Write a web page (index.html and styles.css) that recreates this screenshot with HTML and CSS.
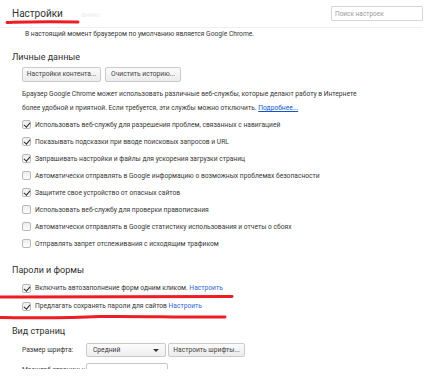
FILE: index.html
```html
<!DOCTYPE html>
<html lang="ru">
<head>
<meta charset="utf-8">
<title>Настройки</title>
<link rel="stylesheet" href="styles.css">
</head>
<body>
<div class="viewport">
  <header class="hdr">
    <h1 class="title">Настройки<span class="ghost">анию</span></h1>
    <input class="search" type="text" placeholder="Поиск настроек">
  </header>
  <p class="note">В настоящий момент браузером по умолчанию является Google Chrome.</p>

  <section class="sec">
    <h3 class="sec-title">Личные данные</h3>
    <div class="indent">
      <div class="btns">
        <button class="btn btn-a">Настройки контента...</button>
        <button class="btn btn-b">Очистить историю...</button>
      </div>
      <p class="desc">Браузер Google Chrome может использовать различные веб-службы, которые делают работу в Интернете<br>более удобной и приятной. Если требуется, эти службы можно отключить. <a class="link" href="#">Подробнее...</a></p>
      <ul class="checks">
        <li class="row"><span class="cb on"></span>Использовать веб-службу для разрешения проблем, связанных с навигацией</li>
        <li class="row"><span class="cb on"></span>Показывать подсказки при вводе поисковых запросов и URL</li>
        <li class="row"><span class="cb on"></span>Запрашивать настройки и файлы для ускорения загрузки страниц</li>
        <li class="row"><span class="cb"></span>Автоматически отправлять в Google информацию о возможных проблемах безопасности</li>
        <li class="row"><span class="cb on"></span>Защитите свое устройство от опасных сайтов</li>
        <li class="row"><span class="cb"></span>Использовать веб-службу для проверки правописания</li>
        <li class="row"><span class="cb"></span>Автоматически отправлять в Google статистику использования и отчеты о сбоях</li>
        <li class="row"><span class="cb"></span>Отправлять запрет отслеживания с исходящим трафиком</li>
      </ul>
    </div>
  </section>

  <section class="sec sec-pw">
    <h3 class="sec-title">Пароли и формы</h3>
    <div class="indent">
      <ul class="checks checks-pw">
        <li class="row"><span class="cb on"></span>Включить автозаполнение форм одним кликом.&nbsp;<a class="link2" href="#">Настроить</a></li>
        <li class="row"><span class="cb on"></span>Предлагать сохранять пароли для сайтов&nbsp;<a class="link2" href="#">Настроить</a></li>
      </ul>
    </div>
  </section>

  <section class="sec sec-view">
    <h3 class="sec-title">Вид страниц</h3>
    <div class="indent">
      <div class="frow">
        <span class="flabel">Размер шрифта:</span>
        <span class="select">Средний<span class="arrow"></span></span>
        <button class="btn btn-font">Настроить шрифты...</button>
      </div>
      <div class="frow">
        <span class="flabel">Масштаб страницы:</span>
        <span class="select select2"></span>
      </div>
    </div>
  </section>
</div>

<svg class="marks" width="434" height="383" viewBox="0 0 434 383" aria-hidden="true">
  <path d="M7 22.5 C 30 21.5, 55 21.5, 78 22" />
  <path d="M0 297 C 80 296.5, 160 296, 232 296.5" />
  <path d="M0 317.5 C 40 318, 70 318, 100 316.5 C 140 316, 180 317.5, 225 317" />
</svg>
</body>
</html>
```

FILE: styles.css
```css
* { box-sizing: border-box; }

html, body {
  margin: 0;
  background: #fff;
}

body {
  width: 434px;
  height: 383px;
  overflow: hidden;
  position: relative;
  font-family: Roboto, "Open Sans", sans-serif;
  color: #383838;
  font-size: 6.7px;
}

.viewport {
  height: 369px;
  overflow: hidden;
}

.hdr {
  width: 423px;
  height: 28px;
  padding-left: 12px;
  display: flex;
  align-items: center;
  justify-content: space-between;
  border-bottom: 1px solid #f0f0f0;
}

.title {
  margin: 0;
  font-size: 10px;
  font-weight: 400;
  color: #333;
  display: flex;
  align-items: baseline;
}

.ghost {
  margin-left: 18px;
  font-size: 7.5px;
  color: #ececec;
}

.search {
  width: 92px;
  height: 15px;
  margin: 0;
  padding: 0 3px;
  border: 1px solid #d6d6d6;
  border-radius: 1px;
  font-family: Roboto, sans-serif;
  font-size: 6.5px;
  color: #999;
  outline: none;
}
.search::placeholder { color: #9a9a9a; }

.note {
  margin: 1px 0 0 25px;
  line-height: 10px;
}

.sec-title {
  margin: 12px 0 0 12px;
  font-size: 9px;
  line-height: 12px;
  font-weight: 400;
  color: #303030;
}

.indent {
  padding-left: 22px;
}

.btns {
  display: flex;
  gap: 4px;
  margin-top: 4px;
}

.btn {
  height: 15px;
  margin: 0;
  padding: 0;
  border: 1px solid #cacaca;
  border-radius: 2px;
  background: linear-gradient(#fbfbfb, #ececec);
  font-family: Roboto, sans-serif;
  font-size: 6.7px;
  color: #444;
  line-height: 13px;
  white-space: nowrap;
  text-align: center;
}

.btn-a { width: 79px; }
.btn-b { width: 76px; }

.desc {
  margin: 5px 0 0;
  line-height: 14px;
  white-space: nowrap;
}

.link {
  color: #1155cc;
  text-decoration: underline;
}

.link2 {
  color: #2f68d0;
  text-decoration: none;
}

.checks {
  list-style: none;
  margin: 1px 0 0;
  padding: 0;
}

.row {
  display: flex;
  align-items: center;
  height: 17px;
  white-space: nowrap;
}

.cb {
  width: 9px;
  height: 9px;
  margin-right: 4px;
  flex: none;
  border: 1px solid #b8b8b8;
  border-radius: 2px;
  background: linear-gradient(#ededed, #fdfdfd);
  position: relative;
}

.cb.on::after {
  content: "";
  position: absolute;
  left: 2px;
  top: 0px;
  width: 2.5px;
  height: 5px;
  border-right: 1.6px solid #2b2b2b;
  border-bottom: 1.6px solid #2b2b2b;
  transform: rotate(40deg);
}

.checks-pw {
  margin-top: 3px;
}
.checks-pw .row { height: 18px; }

.sec-pw .sec-title { margin-top: 12px; }
.sec-view .sec-title { margin-top: 10px; }

.frow {
  display: flex;
  align-items: center;
  height: 14px;
  margin-top: 6px;
  white-space: nowrap;
}

.flabel {
  width: 64px;
  flex: none;
  overflow: hidden;
}

.select {
  width: 80px;
  height: 14px;
  border: 1px solid #c8c8c8;
  border-radius: 2px;
  background: linear-gradient(#fbfbfb, #efefef);
  display: flex;
  align-items: center;
  padding-left: 6px;
  position: relative;
}

.select2 { width: 82px; background: #fff; }

.arrow {
  position: absolute;
  right: 6px;
  top: 5px;
  width: 0;
  height: 0;
  border-left: 3px solid transparent;
  border-right: 3px solid transparent;
  border-top: 3px solid #333;
}

.btn-font {
  margin-left: 2px;
  height: 14px;
  width: 77px;
  line-height: 12px;
}

.marks {
  position: absolute;
  left: 0;
  top: 0;
  pointer-events: none;
}

.marks path {
  fill: none;
  stroke: #ee1c25;
  stroke-width: 3;
  stroke-linecap: round;
}
```
